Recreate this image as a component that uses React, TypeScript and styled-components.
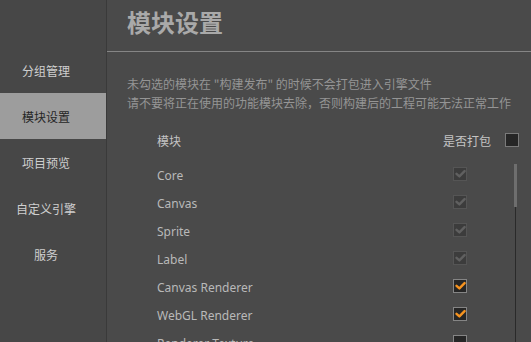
import React from "react";
import styled, { createGlobalStyle } from "styled-components";

const GlobalStyle = createGlobalStyle`
  html, body {
    margin: 0;
    padding: 0;
    background: #4a4a4a;
  }
  body {
    font-family: "Noto Sans", "Noto Sans CJK SC", sans-serif;
  }
`;

const Layout = styled.div`
  display: flex;
  width: 531px;
  height: 342px;
  overflow: hidden;
  background: #4a4a4a;
`;

const Sidebar = styled.nav`
  width: 106px;
  flex-shrink: 0;
  background: #474747;
  border-right: 1px solid #3a3a3a;
  padding-top: 47px;
  display: flex;
  flex-direction: column;
`;

const NavItem = styled.div<{ $active?: boolean }>`
  height: 46px;
  display: flex;
  align-items: center;
  justify-content: center;
  padding-right: 14px;
  font-family: "Noto Sans CJK SC", sans-serif;
  font-size: 12px;
  color: ${(p) => (p.$active ? "#262626" : "#cfcfcf")};
  background: ${(p) => (p.$active ? "#9d9d9d" : "transparent")};
`;

const Main = styled.main`
  flex: 1;
  display: flex;
  flex-direction: column;
  min-width: 0;
`;

const Heading = styled.div`
  height: 51px;
  border-bottom: 1px solid #858585;
  padding-left: 20px;
`;

const Title = styled.h1`
  margin: 0;
  line-height: 44px;
  font-family: "Noto Sans CJK SC", sans-serif;
  font-size: 24px;
  font-weight: 700;
  color: #a9a9a9;
`;

const Notice = styled.div`
  padding: 22px 12px 0 20px;
  font-family: "Noto Sans CJK SC", sans-serif;
  font-size: 12px;
  line-height: 19px;
  color: #959595;
  white-space: nowrap;
`;

const Table = styled.div`
  margin: 14px 12px 0 50px;
  flex: 1;
  display: flex;
  flex-direction: column;
  min-height: 0;
`;

const HeaderRow = styled.div`
  height: 28px;
  display: flex;
  align-items: center;
  font-family: "Noto Sans CJK SC", sans-serif;
  font-size: 12px;
  color: #c4c4c4;
  margin-bottom: 7px;
`;

const HeaderName = styled.span`
  flex: 1;
`;

const HeaderPack = styled.span`
  margin-right: 14px;
`;

const Body = styled.div`
  flex: 1;
  display: flex;
  min-height: 0;
`;

const List = styled.div`
  flex: 1;
  margin-right: 47px;
`;

const Row = styled.div`
  height: 28px;
  display: flex;
  align-items: center;
  font-size: 12px;
  color: #b9b9b9;
`;

const RowName = styled.span`
  flex: 1;
  white-space: nowrap;
`;

const Track = styled.div`
  width: 3px;
  margin: 3px 2px 0 0;
  display: flex;
  flex-direction: column;
  align-items: center;
`;

const Thumb = styled.div`
  width: 3px;
  height: 43px;
  background: #6e6e6e;
`;

const Rail = styled.div`
  flex: 1;
  width: 1px;
  background: #2a2a2a;
`;

type BoxState = "locked" | "checked" | "empty";

const Box = styled.span<{ $state: BoxState }>`
  width: 14px;
  height: 14px;
  box-sizing: border-box;
  flex-shrink: 0;
  display: flex;
  align-items: center;
  justify-content: center;
  border: 1px solid ${(p) => (p.$state === "locked" ? "#555555" : "#858585")};
  background: ${(p) => (p.$state === "locked" ? "#3c3c3c" : "#262626")};
  margin-top: -3px;

  & > svg {
    width: 11px;
    height: 11px;
  }
`;

const HeaderBox = styled(Box)`
  margin-top: 0;
  border-color: #7a7a7a;
`;

const Checkbox: React.FC<{ state: BoxState }> = ({ state }) => (
  <Box $state={state}>
    {state !== "empty" && (
      <svg viewBox="0 0 10 10">
        <path
          d="M1.4 5.3 L4 7.6 L8.7 2.8"
          fill="none"
          stroke={state === "locked" ? "#606060" : "#f6931f"}
          strokeWidth="2.2"
          strokeLinecap="round"
          strokeLinejoin="round"
        />
      </svg>
    )}
  </Box>
);

const navItems = ["分组管理", "模块设置", "项目预览", "自定义引擎", "服务"];

const modules: { name: string; state: BoxState }[] = [
  { name: "Core", state: "locked" },
  { name: "Canvas", state: "locked" },
  { name: "Sprite", state: "locked" },
  { name: "Label", state: "locked" },
  { name: "Canvas Renderer", state: "checked" },
  { name: "WebGL Renderer", state: "checked" },
  { name: "Renderer Texture", state: "empty" }
];

export default function App() {
  return (
    <Layout>
      <GlobalStyle />
      <Sidebar>
        {navItems.map((item) => (
          <NavItem key={item} $active={item === "模块设置"}>
            {item}
          </NavItem>
        ))}
      </Sidebar>
      <Main>
        <Heading>
          <Title>模块设置</Title>
        </Heading>
        <Notice>
          <div>未勾选的模块在 "构建发布" 的时候不会打包进入引擎文件</div>
          <div>请不要将正在使用的功能模块去除，否则构建后的工程可能无法正常工作</div>
        </Notice>
        <Table>
          <HeaderRow>
            <HeaderName>模块</HeaderName>
            <HeaderPack>是否打包</HeaderPack>
            <HeaderBox $state="empty" />
          </HeaderRow>
          <Body>
            <List>
              {modules.map((m) => (
                <Row key={m.name}>
                  <RowName>{m.name}</RowName>
                  <Checkbox state={m.state} />
                </Row>
              ))}
            </List>
            <Track>
              <Thumb />
              <Rail />
            </Track>
          </Body>
        </Table>
      </Main>
    </Layout>
  );
}
